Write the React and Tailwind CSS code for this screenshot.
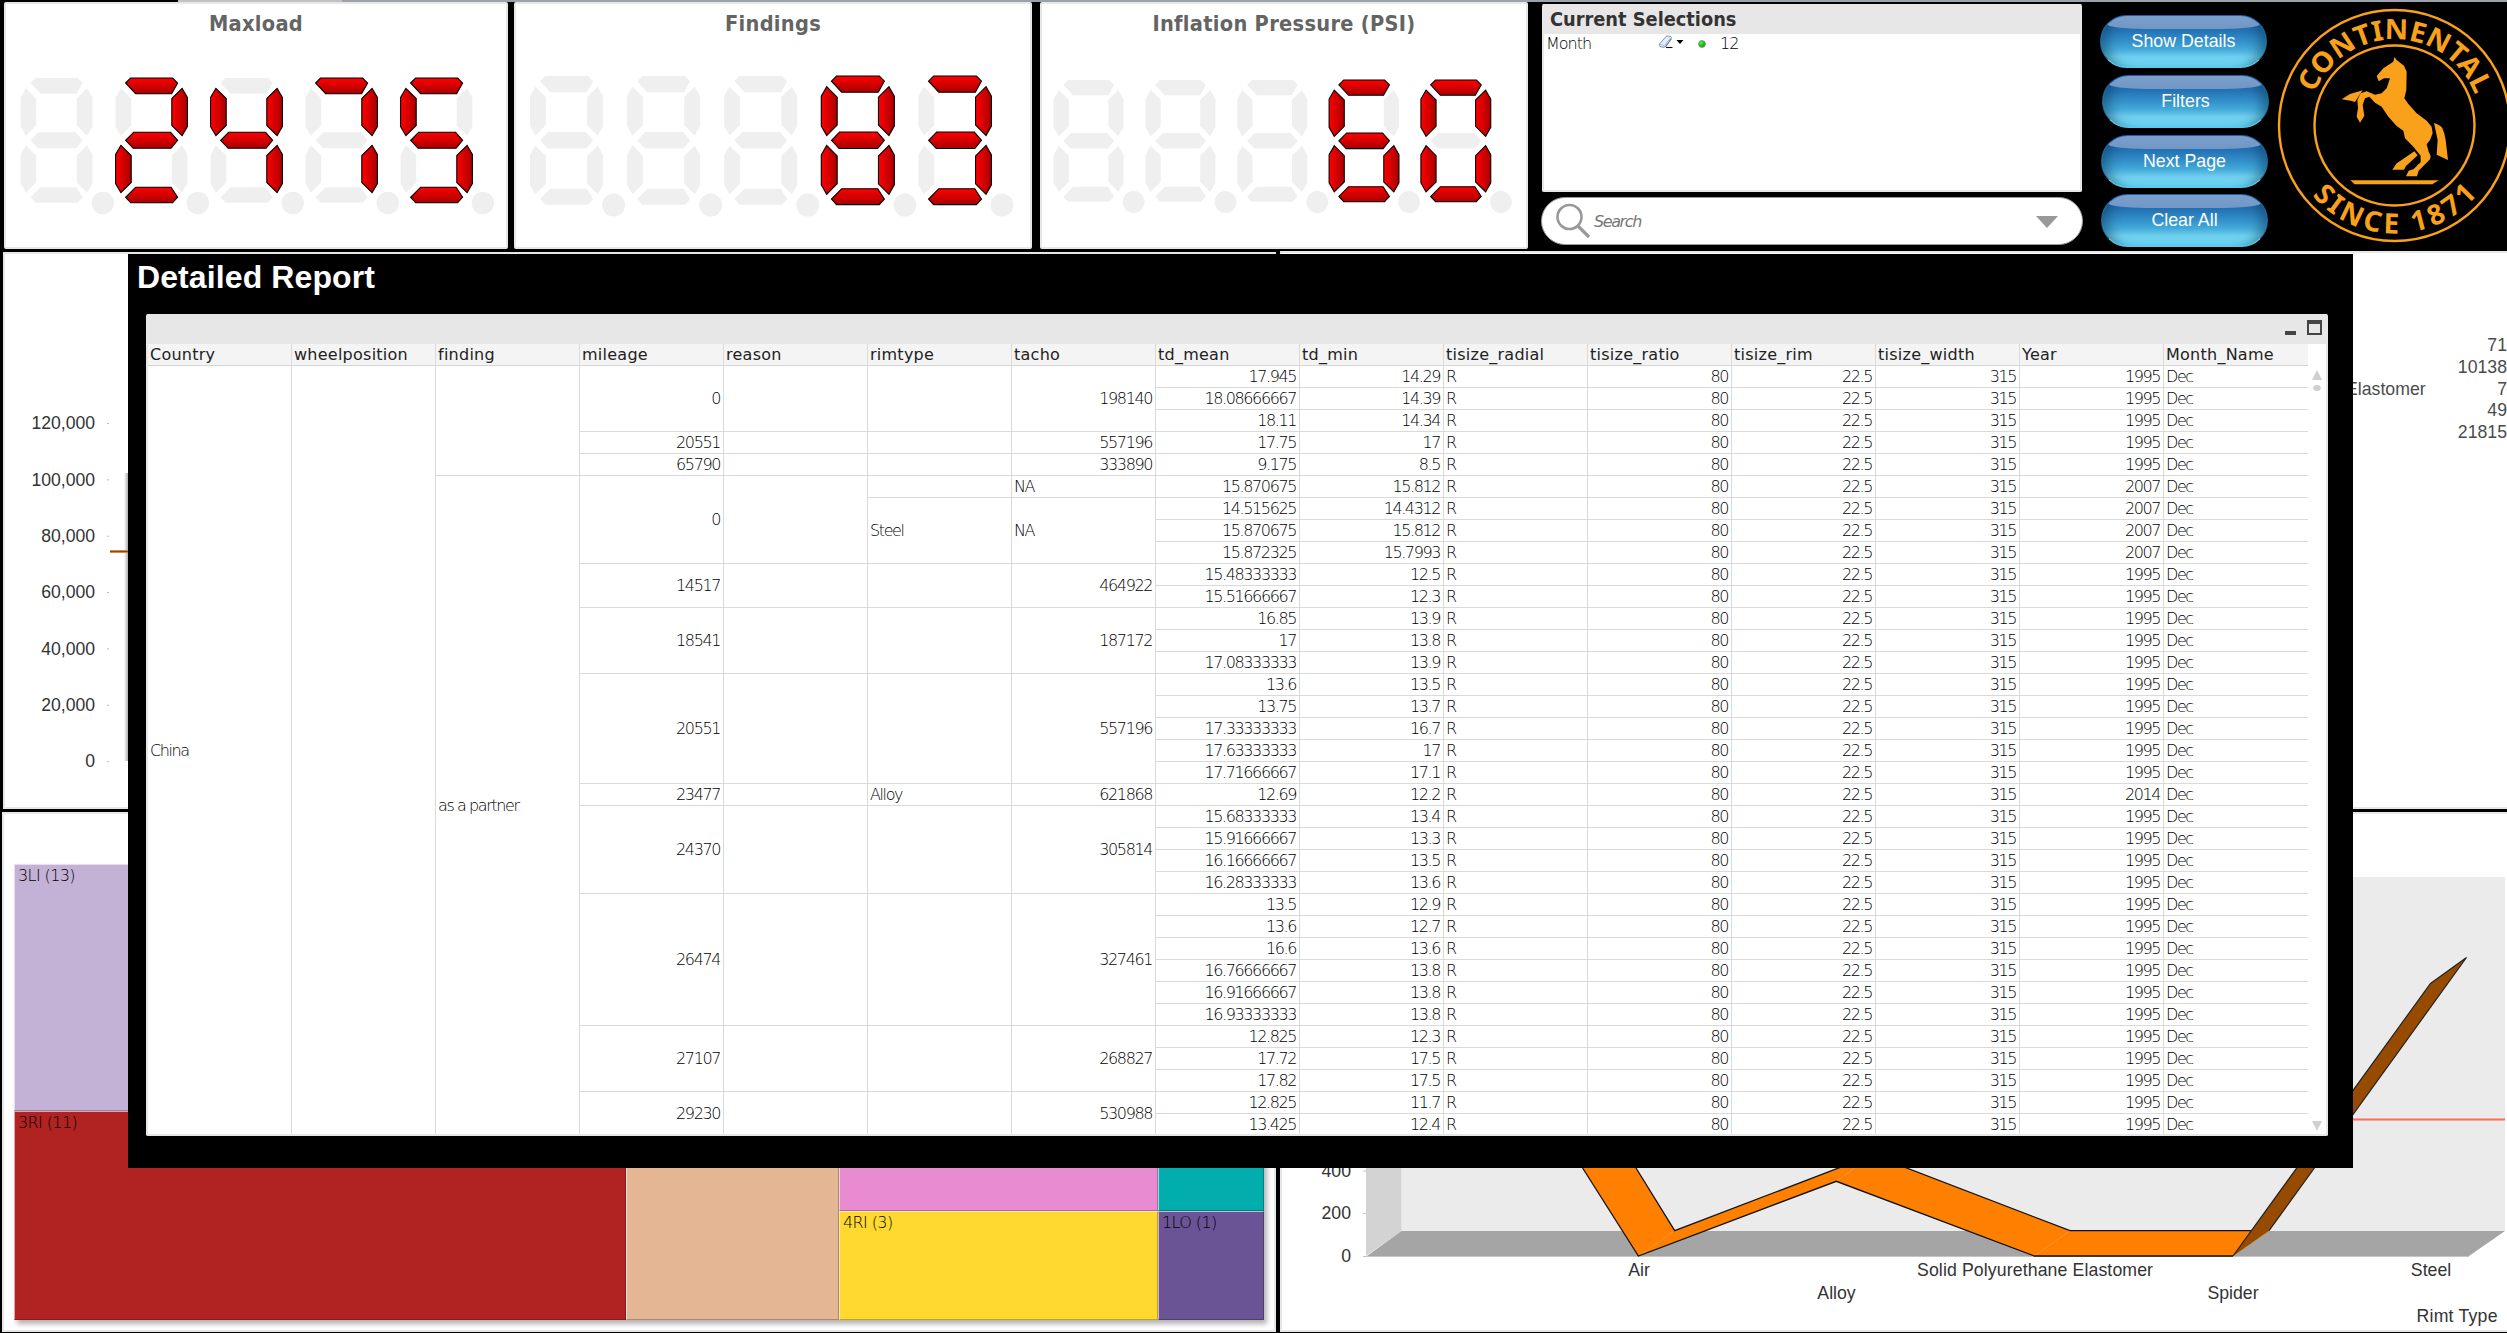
import React from "react";

const condensed = "font-['DejaVu_Sans_Condensed','DejaVu_Sans',sans-serif] [font-stretch:condensed]";
const tahoma = "font-['DejaVu_Sans',sans-serif] font-extralight text-[16px] tracking-[-1.4px]";
const arial = "font-['Liberation_Sans',Arial,sans-serif]";

/* ---------- seven segment displays ---------- */

const SEGMENTS = {
  a: "10,5 15,0 57,0 62,5 56,15.7 20,15.7",
  g: "10,62.3 18,54.3 55,54.3 62,62.3 55.5,70.3 17.5,70.3",
  d: "20,109.3 55.5,109.3 62,119.3 57,124.7 15,124.7 10,119.3",
  f: "5.3,10.3 15.6,20.5 15.6,47.5 5.3,57.7 0,48.5 0,19.5",
  e: "5.3,67.3 15.6,77.5 15.6,104.5 5.3,114.7 0,105.5 0,76.5",
  b: "66.5,10.3 56.2,20.5 56.2,47.5 66.5,57.7 71.8,48.5 71.8,19.5",
  c: "66.5,67.3 56.2,77.5 56.2,104.5 66.5,114.7 71.8,105.5 71.8,76.5",
};

const LIT = { 0: "abcdef", 2: "abged", 3: "abgcd", 4: "fgbc", 5: "afgcd", 6: "afgecd", 7: "abc", 8: "abcdefg" };

function Display({ title, value, className, width, x, y, pitch, sx, sy }) {
  const cells = value.padStart(5, " ").split("");
  return (
    <section className={"flex flex-col border-2 border-[#e7e7e7] bg-white h-[247px] rounded-[2px] " + className}>
      <h2 className={condensed + " mt-[6px] h-[29px] text-center text-[21.6px] leading-[28px] font-bold tracking-[0.3px] text-[#646464] whitespace-nowrap"}>
        {title}
      </h2>
      <svg className="block" width={width} height="205" viewBox={`2 39 ${width} 205`}>
        <defs>
          <linearGradient id="segV" x1="0" y1="0" x2="0" y2="1">
            <stop offset="0" stopColor="#ff0000" />
            <stop offset="1" stopColor="#a80000" />
          </linearGradient>
          <linearGradient id="segH" x1="0" y1="0" x2="1" y2="0">
            <stop offset="0" stopColor="#ff0000" />
            <stop offset="1" stopColor="#a80000" />
          </linearGradient>
        </defs>
        {cells.map((c, i) => (
          <g key={i} transform={`translate(${x + i * pitch} ${y}) scale(${sx} ${sy})`}>
            {Object.entries(SEGMENTS).map(([name, points]) => {
              const on = c !== " " && LIT[c].includes(name);
              return (
                <polygon
                  key={name}
                  points={points}
                  fill={on ? ("agd".includes(name) ? "url(#segV)" : "url(#segH)") : "#efefef"}
                  stroke={on ? "#000" : "none"}
                  strokeWidth="1.1"
                />
              );
            })}
            <circle cx="82.2" cy="125" r="11.2" fill="#efefef" />
          </g>
        ))}
      </svg>
    </section>
  );
}

/* ---------- selections and search ---------- */

function Selections() {
  return (
    <section className="mt-[2px] h-[188px] w-[540px] rounded-[2px] border-2 border-t-0 border-[#e7e7e7] bg-white">
      <h2 className={condensed + " h-[30px] bg-[#e7e7e7] pl-[6px] text-[19.8px] leading-[31px] font-bold text-[#333]"}>
        Current Selections
      </h2>
      <div className={tahoma + " flex h-[20px] items-center pl-[2px] leading-[20px] text-black"}>
        <span className="w-[112px] tracking-[-1px]">Month</span>
        <svg width="26" height="14" viewBox="0 0 26 14" className="-mt-[5px]">
          <path d="M1.5 9L8 1.5Q9 .8 10.5 1L13 1.8Q14 2.6 13 4L7.5 11.5Q6.5 12.5 5 12.2L2 11.5Q.8 10.5 1.5 9Z" fill="#e6edf8" stroke="#7288ad" strokeWidth="0.9" />
          <path d="M2 9.5L6.5 10.5L12.5 3" fill="none" stroke="#9fb2d0" strokeWidth="0.8" />
          <path d="M7.5 12L13.2 4" stroke="#5a7096" strokeWidth="1" />
          <path d="M8 12.5H14.5" stroke="#111" strokeWidth="1.1" />
          <path d="M18.5 5H25.5L22 9Z" fill="#000" />
        </svg>
        <span className="ml-[14px] size-[8px] rounded-full border border-[#8a8f98] bg-[radial-gradient(circle_at_35%_30%,#5df05d,#00cc00_50%,#009a00)]" />
        <span className="ml-[14px] tracking-[-1px]">12</span>
      </div>
    </section>
  );
}

function Search() {
  return (
    <div className="-ml-px mt-[5px] flex h-[48px] w-[542px] items-center rounded-full border border-[#999] bg-white">
      <svg className="ml-[13px]" width="36" height="36" viewBox="0 0 36 36" fill="none" stroke="#999">
        <circle cx="14.5" cy="14" r="12" strokeWidth="2.6" />
        <path d="M23 23L34 34" strokeWidth="3.2" />
      </svg>
      <span className={tahoma + " mt-px ml-[3px] italic text-[#777]"}>Search</span>
      <svg className="ml-auto mr-[24px] mt-[2px]" width="22" height="12" viewBox="0 0 22 12">
        <path d="M0 0H22L11 12Z" fill="#999" />
      </svg>
    </div>
  );
}

/* ---------- buttons and logo ---------- */

function GlossyButton({ children, className }) {
  return (
    <button
      className={
        arial +
        " relative h-[53px] w-[167px] overflow-hidden rounded-[27px] border border-t-[#1d5fae] border-x-[#1e6796] border-b-[#62c6e6] bg-[linear-gradient(180deg,#1e62a8_0%,#2372b4_28%,#3490ca_50%,#44acdb_66%,#70cfee_80%,#6fd2f1_88%,#63d8f9_100%)] text-[17.8px] text-white shadow-[inset_14px_0_12px_-8px_rgba(10,60,90,0.5),inset_-14px_0_12px_-8px_rgba(10,60,90,0.5)] " +
        className
      }
    >
      <span className="absolute left-[6px] top-0 h-[13px] w-[153px] rounded-b-[50%_10px] rounded-t-[16px] bg-[linear-gradient(180deg,#7a9fcd,#7397c5)]" />
      <span className="relative whitespace-nowrap">{children}</span>
    </button>
  );
}

function Logo() {
  const gold = "#f9a11b";
  return (
    <svg className="mt-[4px] ml-[7px] shrink-0 overflow-visible" width="236" height="240" viewBox="2276 6 236 240" fontFamily="'Noto Sans','Open Sans',sans-serif">
      <defs>
        <path id="arcTop" d="M 2308.3 125.5 A 86.2 86.2 0 0 1 2480.7 125.5" />
        <path id="arcBottom" d="M 2286.5 125.5 A 108 108 0 0 0 2502.5 125.5" />
      </defs>
      <circle cx="2394.5" cy="125.5" r="115.5" fill="none" stroke={gold} strokeWidth="2.4" />
      <circle cx="2394.5" cy="125.5" r="80" fill="none" stroke={gold} strokeWidth="2.4" />
      <text fill={gold} fontSize="28" fontWeight="700" textLength="206" lengthAdjust="spacingAndGlyphs">
        <textPath href="#arcTop" startOffset="33">CONTINENTAL</textPath>
      </text>
      <text fill={gold} fontSize="28" fontWeight="700" textLength="188" lengthAdjust="spacing">
        <textPath href="#arcBottom" startOffset="76">SINCE 1871</textPath>
      </text>
      <g transform="translate(2080 0) scale(0.33333)" fill={gold}>
        <path d="M943 171L950 180L972 197L980 215L979 270L973 295L985 312L1010 340L1040 362L1055 380L1058 400L1050 420L1040 433L1046 455L1052 468L1050 478L1016 512L1011 529L978 529L986 512L1000 508L1022 487L1022 467L1000 440L975 415L970 392L950 378L925 350L905 320L885 308L868 290L855 295L848 315L853 347L840 368L830 350L834 325L832 300L842 280L860 274L885 284L905 280L920 265L930 235L912 235L896 244L890 228L910 205L940 185Z" />
        <path d="M785 298L810 282L848 271L835 290L825 306L812 302Z" />
        <path d="M1003 454L1013 466L978 498L972 509L937 509L950 490L965 480Z" />
        <path d="M1062 369Q1080 375 1087 384Q1094 400 1097 420L1104 480L1070 464L1073 420Z" />
        <path d="M811 541L1076 541L1057 553L824 553Z" />
      </g>
    </svg>
  );
}

/* ---------- background charts ---------- */

const PANEL = "border-2 border-[#e7e7e7] bg-white overflow-hidden shrink-0 ";

function AxisPanel() {
  const ticks = ["120,000", "100,000", "80,000", "60,000", "40,000", "20,000", "0"];
  return (
    <section className={PANEL + "ml-[3px] h-[557px] w-[1273px]"}>
      <svg width="1269" height="553" viewBox="5 254 1269 553" fontFamily="'Liberation Sans',Arial,sans-serif">
        <defs>
          <linearGradient id="barShade" x1="0" x2="1" y1="0" y2="0">
            <stop offset="0" stopColor="#fff" />
            <stop offset="1" stopColor="#999" />
          </linearGradient>
        </defs>
        {ticks.map((t, i) => (
          <g key={t}>
            <text x="95" y={429.3 + i * 56.35} textAnchor="end" fontSize="17.6" fill="#333">{t}</text>
            <path d={`M107 ${423.5 + i * 56.35}h2`} stroke="#bbb" />
          </g>
        ))}
        <rect x="124" y="473" width="5" height="288" fill="url(#barShade)" />
        <rect x="110" y="550" width="20" height="3" fill="#c88a50" />
        <rect x="110" y="551" width="20" height="1" fill="#8a4a10" />
      </svg>
    </section>
  );
}

function LegendPanel() {
  const rows = [["", "71"], ["", "10138"], ["Elastomer", "7"], ["", "49"], ["", "21815"]];
  return (
    <section className={PANEL + "h-[558px] w-[1227px] border-r-0"}>
      <div className={arial + " ml-auto mt-[81px] flex w-[161px] flex-col text-[17.7px] text-[#4b4b4b]"}>
        {rows.map(([label, n], i) => (
          <div key={i} className="flex h-[21.8px] items-center justify-between leading-[22px] whitespace-nowrap">
            <span>{label}</span>
            <span>{n}</span>
          </div>
        ))}
      </div>
    </section>
  );
}

function Tile({ label, className }) {
  return (
    <div
      className={
        "font-['DejaVu_Sans',sans-serif] font-extralight text-[16px] tracking-[-0.6px] border border-t-white/60 border-l-white/60 border-r-black/25 border-b-black/25 pl-[3px] pt-[2px] leading-[18px] text-black " +
        className
      }
    >
      {label}
    </div>
  );
}

function TreeMap() {
  return (
    <section className={PANEL + "ml-[2px] h-[520px] w-[1274px]"}>
      <div className="ml-[10px] mt-[50px] flex h-[456px] w-[1250px] shadow-[3px_4px_5px_rgba(0,0,0,0.3)]">
        <div className="flex w-[612px] flex-col">
          <Tile label="3LI (13)" className="h-[247px] bg-[#c3b1d6]" />
          <Tile label="3RI (11)" className="h-[209px] bg-[#b12323]" />
        </div>
        <Tile label="" className="w-[213px] bg-[#e4b694]" />
        <div className="flex w-[319px] flex-col">
          <Tile label="" className="h-[347px] bg-[#e88bd1]" />
          <Tile label="4RI (3)" className="h-[109px] bg-[#ffd92f]" />
        </div>
        <div className="flex w-[106px] flex-col">
          <Tile label="" className="h-[347px] bg-[#02adad]" />
          <Tile label="1LO (1)" className="h-[109px] bg-[#6a5495]" />
        </div>
      </div>
    </section>
  );
}

function RibbonChart() {
  return (
    <section className={PANEL + "h-[520px] w-[1227px] border-r-0"}>
      <svg width="1225" height="516" viewBox="1282 814 1225 516" fontFamily="'Liberation Sans',Arial,sans-serif" fontSize="17.7" fill="#333">
        <rect x="1401.5" y="877" width="1103.5" height="354" fill="#ebebeb" />
        <polygon points="1366,902 1401.5,877 1401.5,1231 1366,1256" fill="#d3d3d3" />
        <polygon points="1367,1256 1401.5,1231 2505,1231 2469,1256" fill="#a5a5a5" />
        <path d="M1363 1256.5H2469M1363 1171h3M1363 1213.5h3" stroke="#c4c4c4" />
        <rect x="1401" y="1118" width="1104" height="3" fill="#f8a79c" />
        <rect x="1401" y="1119" width="1104" height="1" fill="#f5705f" />
        <g fill="#ff8000">
          <polygon points="1582.6,1168 1636,1168 1674.7,1230.7 1638.4,1256" />
          <polygon points="1638.4,1256 1674.7,1230.7 1872.6,1155 1836.3,1181.3" />
          <polygon points="1836.3,1181.3 1872.6,1155 2070,1230.7 2034.3,1256" />
          <polygon points="2034.3,1256 2070,1230.7 2269,1230.7 2233,1256" />
        </g>
        <path d="M1638.4 1256L1674.7 1230.7M1836.3 1181.3L1872.6 1155M2034.3 1256L2070 1230.7" stroke="#ff9326" />
        <path
          d="M1582.6 1168L1638.4 1256L1836.3 1181.3L2034.3 1256H2233M1636 1168L1674.7 1230.7L1872.6 1155L2070 1230.7H2252"
          fill="none"
          stroke="#111"
          strokeWidth="1.3"
        />
        <polygon points="2233,1256 2269,1230.7 2466.5,957.5 2430.5,983.5" fill="#964b00" />
        <path d="M2233 1256L2430.5 983.5L2466.5 957.5L2269 1230.7" fill="none" stroke="#222" strokeWidth="1.2" />
        <g textAnchor="end">
          <text x="1351" y="1177">400</text>
          <text x="1351" y="1219">200</text>
          <text x="1351" y="1262">0</text>
          <text x="2497.5" y="1322" textLength="81">Rimt Type</text>
        </g>
        <g textAnchor="middle">
          <text x="1639" y="1276">Air</text>
          <text x="1836.5" y="1299">Alloy</text>
          <text x="2035" y="1276" textLength="236">Solid Polyurethane Elastomer</text>
          <text x="2233" y="1299">Spider</text>
          <text x="2431" y="1276">Steel</text>
        </g>
      </svg>
    </section>
  );
}

/* ---------- detailed report ---------- */

const SPANS = [3, 1, 1, 4, 2, 3, 5, 1, 4, 6, 3, 2];
const RIM_SPANS = [3, 1, 1, 1, 3, 2, 3, 5, 1, 4, 6, 3, 2];
const MILEAGE = ["0", "20551", "65790", "0", "14517", "18541", "20551", "23477", "24370", "26474", "27107", "29230"];
const RIM = ["", "", "", "", "Steel", "", "", "", "Alloy", "", "", "", ""];
const TACHO = ["198140", "557196", "333890", "NA", "NA", "464922", "187172", "557196", "621868", "305814", "327461", "268827", "530988"];
const MEAN = "17.945 18.08666667 18.11 17.75 9.175 15.870675 14.515625 15.870675 15.872325 15.48333333 15.51666667 16.85 17 17.08333333 13.6 13.75 17.33333333 17.63333333 17.71666667 12.69 15.68333333 15.91666667 16.16666667 16.28333333 13.5 13.6 16.6 16.76666667 16.91666667 16.93333333 12.825 17.72 17.82 12.825 13.425".split(" ");
const MIN = "14.29 14.39 14.34 17 8.5 15.812 14.4312 15.812 15.7993 12.5 12.3 13.9 13.8 13.9 13.5 13.7 16.7 17 17.1 12.2 13.4 13.3 13.5 13.6 12.9 12.7 13.6 13.8 13.8 13.8 12.3 17.5 17.5 11.7 12.4".split(" ");
const YEAR = MEAN.map((_, i) => (i >= 5 && i <= 8 ? "2007" : i === 19 ? "2014" : "1995"));

const single = (values) => values.map((v) => [v, 1]);
const same = (v) => MEAN.map(() => [v, 1]);

const COLUMNS = [
  { name: "Country", cells: [["China", 35]] },
  { name: "wheelposition", cells: [["", 35]] },
  { name: "finding", cells: [["", 5], ["as a partner", 30]] },
  { name: "mileage", cells: MILEAGE.map((v, i) => [v, SPANS[i]]) },
  { name: "reason", cells: SPANS.map((s) => ["", s]) },
  { name: "rimtype", cells: RIM.map((v, i) => [v, RIM_SPANS[i]]) },
  { name: "tacho", cells: TACHO.map((v, i) => [v, RIM_SPANS[i]]) },
  { name: "td_mean", cells: single(MEAN) },
  { name: "td_min", cells: single(MIN) },
  { name: "tisize_radial", cells: same("R") },
  { name: "tisize_ratio", cells: same("80") },
  { name: "tisize_rim", cells: same("22.5") },
  { name: "tisize_width", cells: same("315") },
  { name: "Year", cells: single(YEAR) },
  { name: "Month_Name", cells: same("Dec") },
];

function Column({ name, cells, last }) {
  return (
    <div className={"flex w-[144px] shrink-0 flex-col " + (last ? "" : "border-r border-[#dadada]")}>
      <div className="h-[22px] shrink-0 border-b border-[#d6d6d6] bg-[#f4f4f4] pl-[2px] font-['DejaVu_Sans',sans-serif] text-[16px] leading-[21px] tracking-[0.25px] text-[#222]">
        {name}
      </div>
      {cells.map(([v, span], i) => (
        <div
          key={i}
          className={
            tahoma +
            " flex shrink-0 items-center border-b border-[#dadada] pr-[3px] pl-[2px] leading-[20px] whitespace-nowrap text-black " +
            (span > 5 ? "" : "pt-px ") +
            (/^\d/.test(v) ? "justify-end" : "justify-start")
          }
          style={{ height: span * 22 }}
        >
          {v}
        </div>
      ))}
    </div>
  );
}

function DetailedReport() {
  return (
    <div className="absolute left-[128px] top-[254px] h-[914px] w-[2225px] bg-black">
      <h1 className={arial + " ml-[9px] h-[60px] pt-[5px] text-[32px] leading-[36px] font-bold text-white tracking-[0.1px]"}>Detailed Report</h1>
      <div className="ml-[18px] flex h-[822px] w-[2182px] flex-col rounded-[2px] border-2 border-t-0 border-[#e7e7e7] bg-white">
        <div className="flex h-[30px] shrink-0 justify-end bg-[#e7e7e7]">
          <span className="mt-[17px] h-[4px] w-[11px] bg-[#444]" />
          <span className="ml-[11px] mr-[4px] mt-[6px] h-[15px] w-[15px] border-2 border-t-4 border-[#444]" />
        </div>
        <div className="flex min-h-0 flex-1 overflow-hidden">
          {COLUMNS.map((c, i) => (
            <Column key={c.name} {...c} last={i === COLUMNS.length - 1} />
          ))}
          <div className="flex w-[18px] flex-col items-center justify-between pt-[26px] pb-[3px]">
            <svg width="10" height="24" viewBox="0 0 10 24" fill="#cfcfcf">
              <path d="M5 0L10 10H0Z" />
              <ellipse cx="5" cy="18" rx="3.8" ry="3" />
            </svg>
            <svg width="10" height="10" viewBox="0 0 10 10" fill="#cfcfcf">
              <path d="M0 0H10L5 10Z" />
            </svg>
          </div>
        </div>
      </div>
    </div>
  );
}

export default function App() {
  return (
    <div className="relative h-[1333px] w-[2507px] overflow-hidden bg-black">
      <div className="flex h-[2px]">
        <div className="w-[178px] bg-black" />
        <div className="w-[164px] bg-[#c4c2c0]" />
        <div className="flex-1 bg-[#9aa3a9]" />
      </div>
      <div className="flex h-[250px]">
        <Display title="Maxload" value="2475" className="ml-[4px] w-[504px]" width={500} x={20.6 - 4} y={78} pitch={95} sx={1} sy={1} />
        <Display title="Findings" value="83" className="ml-[6px] w-[518px]" width={514} x={530 - 514} y={76} pitch={97.1} sx={1.017} sy={1.032} />
        <Display title="Inflation Pressure (PSI)" value="60" className="ml-[8px] w-[488px]" width={484} x={1053.7 - 1040} y={80} pitch={91.8} sx={0.973} sy={0.976} />
        <div className="ml-[14px] flex flex-col">
          <Selections />
          <Search />
        </div>
        <div className="ml-[17px] flex flex-col pt-[13px]">
          <GlossyButton className="">Show Details</GlossyButton>
          <GlossyButton className="mt-[7px] ml-[2px]">Filters</GlossyButton>
          <GlossyButton className="mt-[7px] ml-px">Next Page</GlossyButton>
          <GlossyButton className="mt-[6px] ml-px">Clear All</GlossyButton>
        </div>
        <Logo />
      </div>
      <div className="flex items-start">
        <AxisPanel />
        <div className="-mt-px ml-[4px]">
          <LegendPanel />
        </div>
      </div>
      <div className="mt-[3px] flex">
        <TreeMap />
        <div className="ml-[4px]">
          <RibbonChart />
        </div>
      </div>
      <DetailedReport />
    </div>
  );
}
